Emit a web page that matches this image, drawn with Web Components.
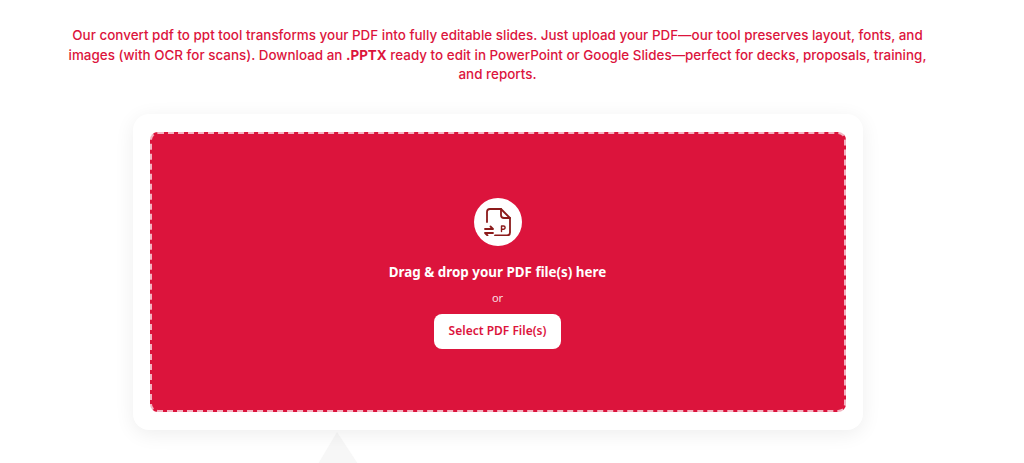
<!DOCTYPE html>
<html lang="en">
<head>
<meta charset="utf-8">
<title>Convert PDF to PPT</title>
<style>
    html, body { margin: 0; padding: 0; background: #fff; overflow: hidden; height: 463px; }
    body { font-family: "Inter", "Liberation Sans", sans-serif; }
</style>
</head>
<body>
<pdf-page>
    <intro-text>
        <span>Our convert pdf to ppt tool transforms your PDF into fully editable slides. Just upload your PDF—our tool preserves layout, fonts, and</span>
        <span>images (with OCR for scans). Download an <strong>.PPTX</strong> ready to edit in PowerPoint or Google Slides—perfect for decks, proposals, training,</span>
        <span>and reports.</span>
    </intro-text>
    <upload-card>
        <drop-zone>
            <file-icon slot="icon"></file-icon>
            <span slot="title">Drag &amp; drop your PDF file(s) here</span>
            <span slot="or">or</span>
            <select-button>Select PDF File(s)</select-button>
        </drop-zone>
    </upload-card>
    <page-art></page-art>
</pdf-page>

<script>
class PdfPage extends HTMLElement {
    constructor() {
        super();
        this.attachShadow({ mode: 'open' }).innerHTML = `<style>
            :host { display: flex; flex-direction: column; align-items: center; width: 995px; padding-top: 26px; }
        </style><slot></slot>`;
    }
}

class IntroText extends HTMLElement {
    constructor() {
        super();
        this.attachShadow({ mode: 'open' }).innerHTML = `<style>
            :host { display: block; width: 880px; height: 60px; text-align: center; color: #dc143c; font: 450 13.4px/19.600px "Inter", "Liberation Sans", sans-serif; letter-spacing: .02px; }
            ::slotted(span) { display: block; white-space: nowrap; }
        </style><slot></slot>`;
    }
}

class UploadCard extends HTMLElement {
    constructor() {
        super();
        this.attachShadow({ mode: 'open' }).innerHTML = `<style>
            :host { display: block; box-sizing: border-box; width: 730px; height: 316px; margin-top: 28px; padding: 18px 17px; background: #fff; border-radius: 16px; box-shadow: 0 4px 20px rgba(0, 0, 0, .07); position: relative; z-index: 1; }
        </style><slot></slot>`;
    }
}

class DropZone extends HTMLElement {
    constructor() {
        super();
        this.attachShadow({ mode: 'open' }).innerHTML = `<style>
            :host { display: flex; flex-direction: column; align-items: center; box-sizing: border-box; height: 280px; padding-top: 63.500px; background: #dc143c; border: 2px dashed #f3b3c1; border-radius: 8px; color: #fff; font-family: "Noto Sans", "Open Sans", sans-serif; }
            .title { margin-top: 16px; font-size: 13.400px; line-height: 20px; font-weight: 700; }
            .or { margin-top: 7px; font-size: 11px; line-height: 18px; opacity: .85; }
            .action { margin-top: 7px; }
        </style>
        <slot name="icon"></slot>
        <div class="title"><slot name="title"></slot></div>
        <div class="or"><slot name="or"></slot></div>
        <div class="action"><slot></slot></div>`;
    }
}

class FileIcon extends HTMLElement {
    constructor() {
        super();
        this.attachShadow({ mode: 'open' }).innerHTML = `<style>
            :host { display: flex; align-items: center; justify-content: center; width: 48px; height: 48px; border-radius: 50%; background: #fff; }
            svg { display: block; }
        </style>
        <svg width="28" height="28" viewBox="0 0 28 28" fill="none" stroke="#8b1a1a" stroke-width="1.800" stroke-linecap="round" stroke-linejoin="round">
            <path d="M3 14V4a3 3 0 0 1 3-3H17l9 9V24.500a3 3 0 0 1-3 3H11"/>
            <path d="M17 1v6a3 3 0 0 0 3 3h6"/>
            <path d="M1 21h8M6.500 18.500L9 21M9 25H1M3.500 27.500L1 25" stroke-width="1.800"/>
            <path d="M17.500 23.500v-5.500h2a1.500 1.500 0 0 1 0 3.200h-2" stroke-width="1.400"/>
        </svg>`;
    }
}

class SelectButton extends HTMLElement {
    constructor() {
        super();
        this.attachShadow({ mode: 'open' }).innerHTML = `<style>
            :host { display: flex; align-items: center; justify-content: center; box-sizing: border-box; width: 127px; height: 35px; background: #fff; color: #dc143c; border-radius: 8px; font: 600 12px/16px "Noto Sans", "Open Sans", sans-serif; }
        </style><slot></slot>`;
    }
}

class PageArt extends HTMLElement {
    constructor() {
        super();
        this.attachShadow({ mode: 'open' }).innerHTML = `<style>
            :host { display: block; align-self: flex-start; margin: 2px 0 0 316px; }
            svg { display: block; }
        </style>
        <svg width="44" height="32" viewBox="0 0 44 32"><path d="M21 0 L2 32 H42 Z" fill="#f7f7f7"/></svg>`;
    }
}

customElements.define('pdf-page', PdfPage);
customElements.define('intro-text', IntroText);
customElements.define('upload-card', UploadCard);
customElements.define('drop-zone', DropZone);
customElements.define('file-icon', FileIcon);
customElements.define('select-button', SelectButton);
customElements.define('page-art', PageArt);
</script>
</body>
</html>
